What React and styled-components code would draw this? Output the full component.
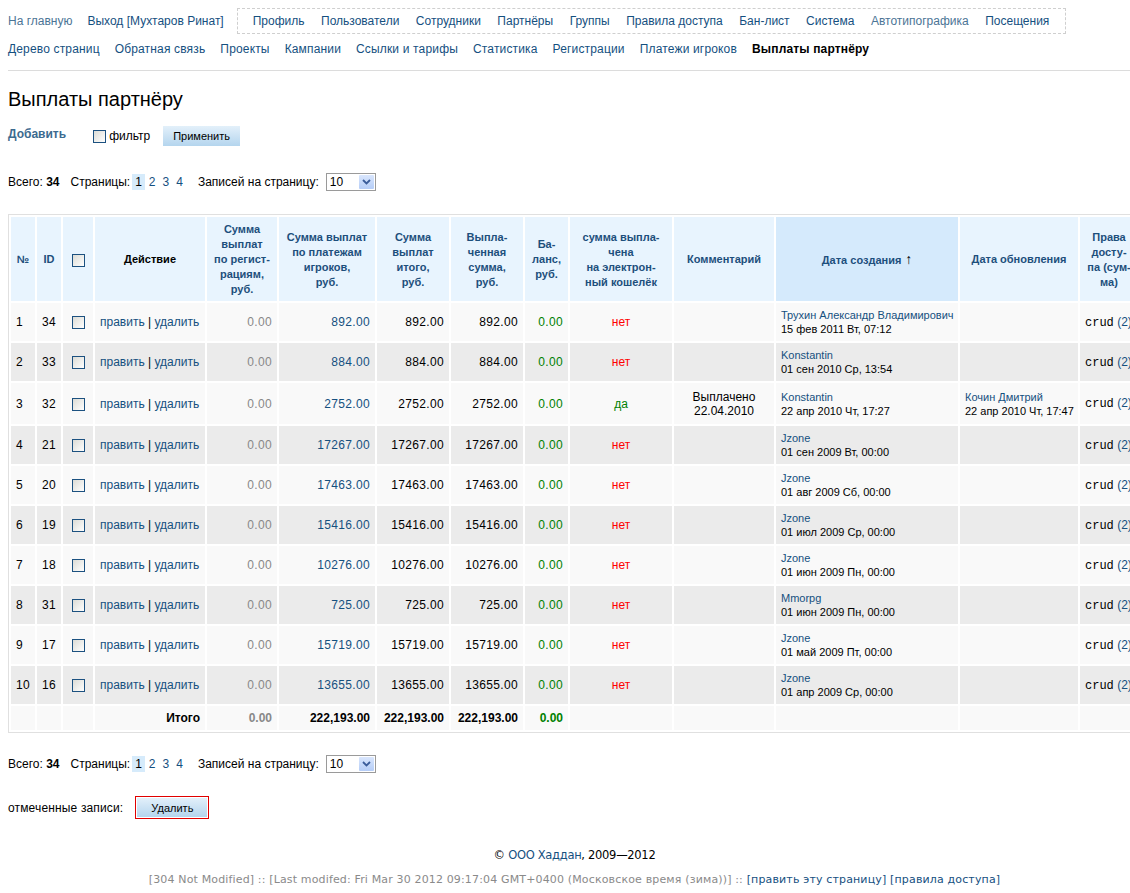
import styled, { createGlobalStyle } from "styled-components";

const GlobalStyle = createGlobalStyle`
    html, body {
        margin: 0;
        padding: 0;
        background: #fff;
        overflow-x: hidden;
    }
    body {
        font-family: "Liberation Sans", Arial, sans-serif;
        font-size: 12px;
        color: #000;
    }
`;

const Page = styled.div`
    width: 1133px;
    padding: 8px 8px 0;
`;

const NavRow = styled.div`
    display: flex;
    align-items: center;
    gap: 15px;
    height: 26px;
`;

const NavBox = styled.div`
    display: flex;
    align-items: center;
    gap: 16.5px;
    height: 24px;
    padding: 0 16px 0 15px;
    border: 1px dashed #cfcfcf;
    margin-left: -2px;
`;

const NavLink = styled.a`
    color: ${(p) => (p.$light ? "#4c7596" : "#15507f")};
    text-decoration: none;
    white-space: nowrap;
    line-height: 14px;
`;

const Current = styled.b`
    white-space: nowrap;
`;

const SubNav = styled(NavRow)`
    height: 14px;
    margin-top: 8px;
    letter-spacing: 0.16px;
`;

const Divider = styled.div`
    height: 1px;
    background: #dcdcdc;
    margin-top: 14px;
`;

const Heading = styled.h1`
    font-size: 20px;
    font-weight: normal;
    line-height: 24px;
    margin: 16px 0 0;
`;

const Toolbar = styled.div`
    display: flex;
    align-items: center;
    height: 20px;
    margin-top: 15px;
`;

const AddLink = styled.a`
    color: #3c6a8f;
    font-weight: bold;
    text-decoration: none;
    margin-right: 27px;
    position: relative;
    top: -2px;
`;

const Check = styled.span`
    display: inline-block;
    width: 13px;
    height: 13px;
    box-sizing: border-box;
    border: 1px solid #1c5180;
    background: linear-gradient(135deg, #dcdcd6 0%, #f4f4f2 70%, #fff 100%);
    vertical-align: middle;
`;

const FilterLabel = styled.label`
    display: flex;
    align-items: center;
    gap: 3px;
    margin-right: 13px;
`;

const Button = styled.button`
    font-family: "Liberation Sans", Arial, sans-serif;
    font-size: 11px;
    height: ${(p) => p.$h || 20}px;
    padding: 0 ${(p) => p.$pad || 10}px;
    border: none;
    background: linear-gradient(#e3f0fa, #b4d5ee);
    color: #000;
    cursor: pointer;
`;

const DangerWrap = styled.span`
    display: inline-flex;
    border: 1px solid #e00000;
    padding: 1px;
`;

const Pager = styled.div`
    display: flex;
    align-items: center;
    height: 18px;
    margin-top: ${(p) => p.$top}px;
    white-space: nowrap;
`;

const PageNums = styled.span`
    display: inline-flex;
    align-items: center;
    gap: 1px;
    margin: 0 12px 0 2px;
`;

const PageNum = styled.a`
    display: inline-block;
    padding: 1px 3px;
    color: ${(p) => (p.$active ? "#000" : "#15507f")};
    background: ${(p) => (p.$active ? "#d6ebfb" : "transparent")};
    text-decoration: none;
`;

const Gap = styled.span`
    display: inline-block;
    width: ${(p) => p.$w}px;
`;

const SelectBox = styled.span`
    display: inline-flex;
    align-items: center;
    justify-content: space-between;
    width: 50px;
    height: 18px;
    box-sizing: border-box;
    border: 1px solid #9a9a9a;
    padding: 1px 1px 1px 3px;
    margin-left: 7px;
    background: #fff;
`;

const SelectArrow = styled.span`
    display: inline-flex;
    align-items: center;
    justify-content: center;
    width: 15px;
    height: 14px;
    background: linear-gradient(#d9e6fd, #b5cdf7);
    border-radius: 1px;
`;

const TableBox = styled.table`
    width: 1133px;
    table-layout: fixed;
    border: 1px solid #e0e0e0;
    border-spacing: 2px;
    margin-top: 23px;
`;

const Th = styled.th`
    box-sizing: border-box;
    width: ${(p) => p.$w}px;
    background: ${(p) => (p.$sorted ? "#d5eafc" : "#e8f4fe")};
    color: ${(p) => (p.$dark ? "#000" : "#1d4f7c")};
    font-size: 11px;
    font-weight: bold;
    line-height: 15px;
    padding: 5px 3px 4px;
    text-align: center;
    vertical-align: middle;
    white-space: nowrap;
`;

const SortMark = styled.span`
    font-size: 14px;
    font-weight: normal;
    color: #000;
`;

const Tr = styled.tr`
    background: ${(p) => (p.$even ? "#ebebeb" : "#f9f9f9")};
`;

const Td = styled.td`
    box-sizing: border-box;
    height: ${(p) => p.$h || 38}px;
    padding: 0 5px;
    text-align: ${(p) => p.$align || "left"};
    vertical-align: middle;
    white-space: nowrap;
    overflow: hidden;
    line-height: 14px;
    color: ${(p) => p.$color || "#000"};
    font-weight: ${(p) => (p.$bold ? "bold" : "normal")};
    letter-spacing: ${(p) => (p.$num ? "0.35px" : "normal")};
`;

const CellLink = styled.a`
    color: #15507f;
    text-decoration: none;
`;

const Author = styled.a`
    display: block;
    color: #15507f;
    font-size: 11px;
    text-decoration: none;
`;

const Stamp = styled.span`
    display: block;
    font-size: 11px;
`;

const Mono = styled.span`
    font-family: "Liberation Mono", "Courier New", monospace;
    font-size: 12px;
`;

const MarkedRow = styled.div`
    display: flex;
    align-items: center;
    gap: 12px;
    margin-top: 23px;
    letter-spacing: 0.15px;
`;

const Footer = styled.div`
    text-align: center;
    font-family: "DejaVu Sans", Tahoma, sans-serif;
    margin-top: 29px;
`;

const Copy = styled.div`
    line-height: 14px;
    font-size: 11.5px;
    letter-spacing: -0.3px;
`;

const Meta = styled.div`
    color: #8a8a8a;
    margin-top: 11px;
    line-height: 14px;
    font-size: 11px;
    letter-spacing: 0.15px;
    white-space: nowrap;
`;

const FootLink = styled.a`
    color: #15507f;
    text-decoration: none;
`;

const rows = [
    { n: 1, id: 34, sum: "892.00", ok: false, by: "Трухин Александр Владимирович", at: "15 фев 2011 Вт, 07:12" },
    { n: 2, id: 33, sum: "884.00", ok: false, by: "Konstantin", at: "01 сен 2010 Ср, 13:54" },
    {
        n: 3, id: 32, sum: "2752.00", ok: true, by: "Konstantin", at: "22 апр 2010 Чт, 17:27",
        note: ["Выплачено", "22.04.2010"], upBy: "Кочин Дмитрий", upAt: "22 апр 2010 Чт, 17:47",
    },
    { n: 4, id: 21, sum: "17267.00", ok: false, by: "Jzone", at: "01 сен 2009 Вт, 00:00" },
    { n: 5, id: 20, sum: "17463.00", ok: false, by: "Jzone", at: "01 авг 2009 Сб, 00:00" },
    { n: 6, id: 19, sum: "15416.00", ok: false, by: "Jzone", at: "01 июл 2009 Ср, 00:00" },
    { n: 7, id: 18, sum: "10276.00", ok: false, by: "Jzone", at: "01 июн 2009 Пн, 00:00" },
    { n: 8, id: 31, sum: "725.00", ok: false, by: "Mmorpg", at: "01 июн 2009 Пн, 00:00" },
    { n: 9, id: 17, sum: "15719.00", ok: false, by: "Jzone", at: "01 май 2009 Пт, 00:00" },
    { n: 10, id: 16, sum: "13655.00", ok: false, by: "Jzone", at: "01 апр 2009 Ср, 00:00" },
];

const headers = [
    { w: 24, t: ["№"] },
    { w: 24, t: ["ID"] },
    { w: 30, check: true },
    { w: 110, t: ["Действие"], dark: true },
    { w: 70, t: ["Сумма", "выплат", "по регист-", "рациям,", "руб."] },
    { w: 96, t: ["Сумма выплат", "по платежам", "игроков,", "руб."] },
    { w: 72, t: ["Сумма", "выплат", "итого,", "руб."] },
    { w: 72, t: ["Выпла-", "ченная", "сумма,", "руб."] },
    { w: 43, t: ["Ба-", "ланс,", "руб."] },
    { w: 102, t: ["сумма выпла-", "чена", "на электрон-", "ный кошелёк"] },
    { w: 100, t: ["Комментарий"] },
    { w: 182, t: ["Дата создания"], sorted: true },
    { w: 118, t: ["Дата обновления"] },
    { w: 58, t: ["Права", "досту-", "па (сум-", "ма)"] },
];

const Lines = ({ items }) =>
    items.map((line, i) => (
        <span key={i}>
            {i > 0 && <br />}
            {line}
        </span>
    ));

const Arrow = () => (
    <svg width="9" height="6" viewBox="0 0 9 6">
        <path d="M1 1 L4.5 4.5 L8 1" fill="none" stroke="#3a5c9a" strokeWidth="1.8" />
    </svg>
);

const Pagination = ({ top }) => (
    <Pager $top={top}>
        Всего:&nbsp;<b>34</b>
        <Gap $w={11} />
        Страницы:
        <PageNums>
            <PageNum $active>1</PageNum>
            <PageNum>2</PageNum>
            <PageNum>3</PageNum>
            <PageNum>4</PageNum>
        </PageNums>
        Записей на страницу:
        <SelectBox>
            10
            <SelectArrow>
                <Arrow />
            </SelectArrow>
        </SelectBox>
    </Pager>
);

const App = () => {
    return (
        <Page>
            <GlobalStyle />
            <NavRow>
                <NavLink $light>На главную</NavLink>
                <NavLink>Выход [Мухтаров Ринат]</NavLink>
                <NavBox>
                    <NavLink>Профиль</NavLink>
                    <NavLink>Пользователи</NavLink>
                    <NavLink>Сотрудники</NavLink>
                    <NavLink>Партнёры</NavLink>
                    <NavLink>Группы</NavLink>
                    <NavLink>Правила доступа</NavLink>
                    <NavLink>Бан-лист</NavLink>
                    <NavLink>Система</NavLink>
                    <NavLink $light>Автотипографика</NavLink>
                    <NavLink>Посещения</NavLink>
                </NavBox>
            </NavRow>
            <SubNav>
                <NavLink>Дерево страниц</NavLink>
                <NavLink>Обратная связь</NavLink>
                <NavLink>Проекты</NavLink>
                <NavLink>Кампании</NavLink>
                <NavLink>Ссылки и тарифы</NavLink>
                <NavLink>Статистика</NavLink>
                <NavLink>Регистрации</NavLink>
                <NavLink>Платежи игроков</NavLink>
                <Current>Выплаты партнёру</Current>
            </SubNav>
            <Divider />

            <Heading>Выплаты партнёру</Heading>

            <Toolbar>
                <AddLink>Добавить</AddLink>
                <FilterLabel>
                    <Check />
                    фильтр
                </FilterLabel>
                <Button $pad={10}>Применить</Button>
            </Toolbar>

            <Pagination top={27} />

            <TableBox>
                <thead>
                    <tr>
                        {headers.map((h, i) => (
                            <Th key={i} $w={h.w} $dark={h.dark} $sorted={h.sorted}>
                                {h.check ? <Check /> : <Lines items={h.t} />}
                                {h.sorted && <SortMark> ↑</SortMark>}
                            </Th>
                        ))}
                    </tr>
                </thead>
                <tbody>
                    {rows.map((r, i) => (
                        <Tr key={r.id} $even={i % 2 === 1}>
                            <Td $num>{r.n}</Td>
                            <Td $num>{r.id}</Td>
                            <Td $align="center"><Check /></Td>
                            <Td>
                                <CellLink>править</CellLink> | <CellLink>удалить</CellLink>
                            </Td>
                            <Td $num $align="right" $color="#888">0.00</Td>
                            <Td $num $align="right"><CellLink>{r.sum}</CellLink></Td>
                            <Td $num $align="right">{r.sum}</Td>
                            <Td $num $align="right">{r.sum}</Td>
                            <Td $num $align="right" $color="#008000">0.00</Td>
                            <Td $align="center" $color={r.ok ? "#008000" : "#ff0000"}>
                                {r.ok ? "да" : "нет"}
                            </Td>
                            <Td $align="center" $h={r.note ? 41 : 38}>
                                {r.note && <Lines items={r.note} />}
                            </Td>
                            <Td>
                                <Author>{r.by}</Author>
                                <Stamp>{r.at}</Stamp>
                            </Td>
                            <Td>
                                {r.upBy && (
                                    <>
                                        <Author>{r.upBy}</Author>
                                        <Stamp>{r.upAt}</Stamp>
                                    </>
                                )}
                            </Td>
                            <Td>
                                <Mono>crud</Mono> <CellLink>(2)</CellLink>
                            </Td>
                        </Tr>
                    ))}
                    <Tr>
                        <Td $h={24} />
                        <Td $h={24} />
                        <Td $h={24} />
                        <Td $h={24} $align="right" $bold>Итого</Td>
                        <Td $h={24} $align="right" $bold $color="#888">0.00</Td>
                        <Td $h={24} $align="right" $bold>222,193.00</Td>
                        <Td $h={24} $align="right" $bold>222,193.00</Td>
                        <Td $h={24} $align="right" $bold>222,193.00</Td>
                        <Td $h={24} $align="right" $bold $color="#008000">0.00</Td>
                        <Td $h={24} />
                        <Td $h={24} />
                        <Td $h={24} />
                        <Td $h={24} />
                        <Td $h={24} />
                    </Tr>
                </tbody>
            </TableBox>

            <Pagination top={22} />

            <MarkedRow>
                отмеченные записи:
                <DangerWrap>
                    <Button $h={19} $pad={14}>Удалить</Button>
                </DangerWrap>
            </MarkedRow>

            <Footer>
                <Copy>
                    © <FootLink>ООО Хаддан</FootLink>, 2009—2012
                </Copy>
                <Meta>
                    [304 Not Modified] :: [Last modifed: Fri Mar 30 2012 09:17:04 GMT+0400 (Московское время (зима))] ::{" "}
                    <FootLink>[править эту страницу]</FootLink> <FootLink>[правила доступа]</FootLink>
                </Meta>
            </Footer>
        </Page>
    );
};

export default App;
